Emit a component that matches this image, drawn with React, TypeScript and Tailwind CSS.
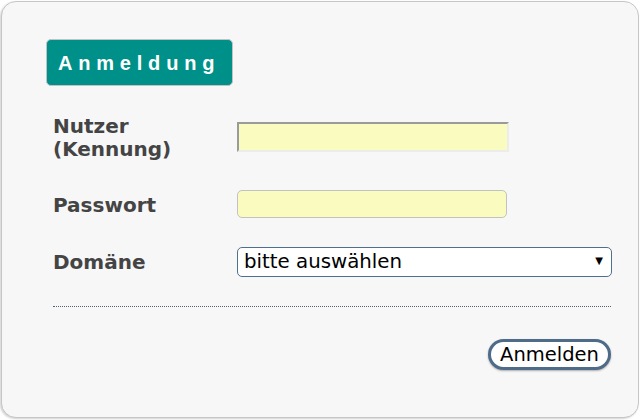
const LoginPanel = () => {
  return (
    <div className="w-[641px] h-[420px] bg-white p-[1px] font-['DejaVu_Sans',sans-serif]">
      <div className="w-[638px] h-[417px] rounded-[15px] border border-[#c6c6c6] bg-[#f7f7f7] shadow-[-1px_1px_2px_rgba(0,0,0,0.18)]">
        <div className="pl-[44px] pt-[37px]">
          <div className="flex h-[47px] w-[187px] items-center rounded-[5px] border border-[#c2c2c2] bg-[#00908a] pl-[11px] font-['Liberation_Sans',Arial,sans-serif] text-[20px] font-bold tracking-[5.8px] text-white">
            Anmeldung
          </div>
        </div>

        <form className="pl-[51px] pt-[29px]" onSubmit={(e) => e.preventDefault()}>
          <div className="flex items-start">
            <label className="w-[184px] text-[20px] leading-[23px] font-bold text-[#444]">
              Nutzer
              <br />
              (Kennung)
            </label>
            <input
              type="text"
              className="mt-[7px] h-[30px] w-[272px] border-2 border-t-[#9a9a9a] border-l-[#9a9a9a] border-r-[#ececec] border-b-[#ececec] bg-[#fafcbf] outline-none"
            />
          </div>

          <div className="mt-[29px] flex items-start">
            <label className="mt-[4px] w-[184px] text-[20px] leading-[23px] font-bold text-[#444]">
              Passwort
            </label>
            <input
              type="password"
              className="h-[28px] w-[270px] rounded-[5px] border border-[#c2c2c2] bg-[#fafcbf] outline-none"
            />
          </div>

          <div className="mt-[29px] flex items-start">
            <label className="mt-[4px] w-[184px] text-[20px] leading-[23px] font-bold text-[#444]">
              Domäne
            </label>
            <div className="relative">
              <select className="h-[30px] w-[375px] appearance-none rounded-[5px] border border-[#506f8f] bg-white pl-[6px] text-[19.8px] leading-[28px] text-black outline-none">
                <option>bitte auswählen</option>
              </select>
              <span className="pointer-events-none absolute right-[9px] top-[9px] text-[10px] leading-none text-black">
                ▼
              </span>
            </div>
          </div>

          <div className="mt-[29px] w-[558px] border-t border-dotted border-[#55606e]" />

          <div className="flex w-[558px] justify-end pt-[32px]">
            <button
              type="submit"
              className="h-[31px] w-[123px] rounded-full border-[3px] border-[#4e6b88] bg-white text-[19.5px] leading-none text-black shadow-[0_1px_2px_rgba(0,0,0,0.3)]"
            >
              Anmelden
            </button>
          </div>
        </form>
      </div>
    </div>
  );
};

export default function App() {
  return <LoginPanel />;
}
